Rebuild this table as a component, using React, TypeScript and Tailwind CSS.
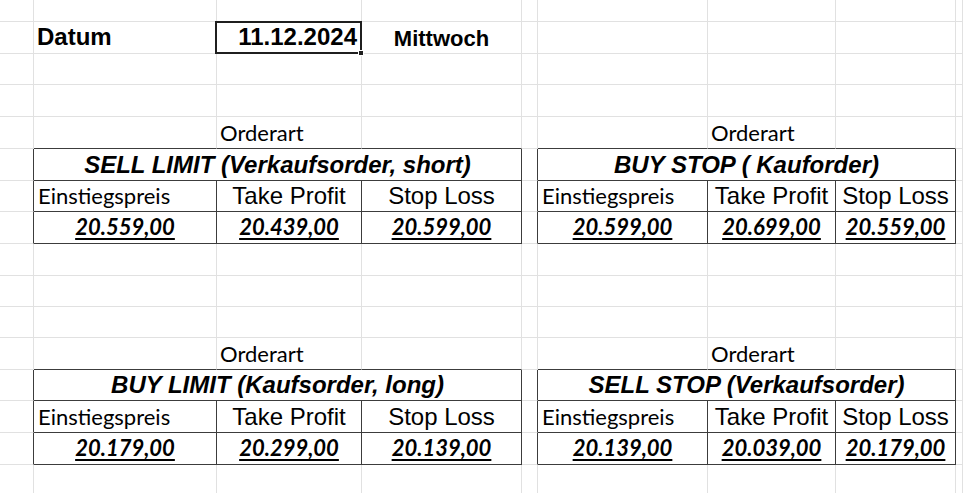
import React from 'react';

type Align = 'left' | 'center' | 'right';

type CellProps = {
  r: number;
  c: number;
  span?: number;
  align?: Align;
  className?: string;
  children?: React.ReactNode;
};

// rows that belong to the two bordered order tables (title, headers, values)
const TABLE_ROWS = [6, 7, 8, 13, 14, 15];
const TITLE_ROWS = [6, 13];
const EDGE_ROWS = [5, 6, 7, 8, 12, 13, 14, 15];

const arial = "font-['Liberation_Sans',Arial,sans-serif]";
const calibri = "font-['Lato','Open_Sans',sans-serif]";

const darkRight = (r: number, edge: number) => {
  if (!TABLE_ROWS.includes(r)) return false;
  if ([0, 3, 4, 7].includes(edge)) return true;
  return !TITLE_ROWS.includes(r) && [1, 2, 5, 6].includes(edge);
};

const darkBottom = (r: number, c: number) =>
  EDGE_ROWS.includes(r) && ((c >= 1 && c <= 3) || (c >= 5 && c <= 7));

const Cell: React.FC<CellProps> = ({ r, c, span = 1, align = 'left', className = '', children }) => {
  const right = darkRight(r, c + span - 1) ? 'border-r-[#3c3c3c]' : 'border-r-[#e1e1e1]';
  const bottom = darkBottom(r, c) ? 'border-b-[#3c3c3c]' : 'border-b-[#e1e1e1]';
  const justify = align === 'center' ? 'justify-center' : align === 'right' ? 'justify-end' : 'justify-start';
  return (
    <div
      className={`flex items-end overflow-visible whitespace-nowrap border-r border-b ${right} ${bottom} ${justify} ${
        span === 3 ? 'col-span-3' : ''
      } ${className}`}
    >
      {children}
    </div>
  );
};

const Empty = ({ r, from, to }: { r: number; from: number; to: number }) => (
  <>
    {Array.from({ length: to - from + 1 }, (_, i) => (
      <Cell key={`${r}-${from + i}`} r={r} c={from + i} />
    ))}
  </>
);

type Order = { title: string; values: [string, string, string] };

const ORDERS: [Order, Order][] = [
  [
    { title: 'SELL LIMIT (Verkaufsorder, short)', values: ['20.559,00', '20.439,00', '20.599,00'] },
    { title: 'BUY STOP ( Kauforder)', values: ['20.599,00', '20.699,00', '20.559,00'] },
  ],
  [
    { title: 'BUY LIMIT (Kaufsorder, long)', values: ['20.179,00', '20.299,00', '20.139,00'] },
    { title: 'SELL STOP (Verkaufsorder)', values: ['20.139,00', '20.039,00', '20.179,00'] },
  ],
];

const orderLabel = `${calibri} text-[22px] leading-none pb-[4px] pl-[3px] text-black`;
const titleText = `${arial} text-[24px] leading-none font-bold italic pb-[3px] text-black`;
const headerArial = `${arial} text-[24px] leading-none pb-[3px] text-black`;
const headerCalibri = `${calibri} text-[22px] leading-none pb-[4px] pl-[4px] text-black`;
const valueText = `${calibri} text-[22px] leading-none font-bold italic underline decoration-[1.5px] underline-offset-[3px] pb-[5px] text-black`;

const OrderBlock = ({ top, pair }: { top: number; pair: [Order, Order] }) => {
  const [left, right] = pair;
  return (
    <>
      {/* Orderart labels */}
      <Empty r={top} from={0} to={1} />
      <Cell r={top} c={2} className={orderLabel}>Orderart</Cell>
      <Empty r={top} from={3} to={5} />
      <Cell r={top} c={6} className={orderLabel}>Orderart</Cell>
      <Empty r={top} from={7} to={8} />

      {/* titles */}
      <Cell r={top + 1} c={0} />
      <Cell r={top + 1} c={1} span={3} align="center" className={titleText}>{left.title}</Cell>
      <Cell r={top + 1} c={4} />
      <Cell r={top + 1} c={5} span={3} align="center" className={titleText}>{right.title}</Cell>
      <Cell r={top + 1} c={8} />

      {/* headers */}
      <Cell r={top + 2} c={0} />
      <Cell r={top + 2} c={1} className={headerCalibri}>Einstiegspreis</Cell>
      <Cell r={top + 2} c={2} align="center" className={headerArial}>Take Profit</Cell>
      <Cell r={top + 2} c={3} align="center" className={headerArial}>Stop Loss</Cell>
      <Cell r={top + 2} c={4} />
      <Cell r={top + 2} c={5} className={headerCalibri}>Einstiegspreis</Cell>
      <Cell r={top + 2} c={6} align="center" className={headerArial}>Take Profit</Cell>
      <Cell r={top + 2} c={7} align="center" className={headerArial}>Stop Loss</Cell>
      <Cell r={top + 2} c={8} />

      {/* values */}
      <Cell r={top + 3} c={0} />
      {left.values.map((v, i) => (
        <Cell key={`l${i}`} r={top + 3} c={1 + i} align="center" className={valueText}>{v}</Cell>
      ))}
      <Cell r={top + 3} c={4} />
      {right.values.map((v, i) => (
        <Cell key={`r${i}`} r={top + 3} c={5 + i} align="center" className={valueText}>{v}</Cell>
      ))}
      <Cell r={top + 3} c={8} />
    </>
  );
};

export default function App() {
  return (
    <div className="h-[493px] w-full overflow-hidden bg-white">
      <div className="grid grid-cols-[34px_183px_145px_160px_16px_170px_128px_120px_1fr] grid-rows-[22px_32px_31px_32px_32px_32px_31px_32px_32px_31px_31px_32px_31px_32px_32px_31px]">
        <Empty r={1} from={0} to={8} />

        {/* Datum row */}
        <Cell r={2} c={0} />
        <Cell r={2} c={1} className={`${arial} text-[24px] leading-none font-bold pb-[4px] pl-[3px] text-black`}>
          Datum
        </Cell>
        <Cell
          r={2}
          c={2}
          align="right"
          className={`relative z-10 ${arial} text-[24px] leading-none font-bold pb-[4px] pr-[4px] text-black`}
        >
          11.12.2024
          {/* selected-cell frame with fill handle */}
          <span className="pointer-events-none absolute -top-[1px] -right-[1px] -bottom-[1px] -left-[2px] border-2 border-[#1f1f1f]" />
          <span className="absolute -right-[3px] -bottom-[3px] h-[6px] w-[6px] border border-white bg-[#1f1f1f]" />
        </Cell>
        <Cell r={2} c={3} align="center" className={`${arial} text-[22px] leading-none font-bold pb-[3px] text-black`}>
          Mittwoch
        </Cell>
        <Empty r={2} from={4} to={8} />

        <Empty r={3} from={0} to={8} />
        <Empty r={4} from={0} to={8} />

        <OrderBlock top={5} pair={ORDERS[0]} />

        <Empty r={9} from={0} to={8} />
        <Empty r={10} from={0} to={8} />
        <Empty r={11} from={0} to={8} />

        <OrderBlock top={12} pair={ORDERS[1]} />

        <Empty r={16} from={0} to={8} />
      </div>
    </div>
  );
}
